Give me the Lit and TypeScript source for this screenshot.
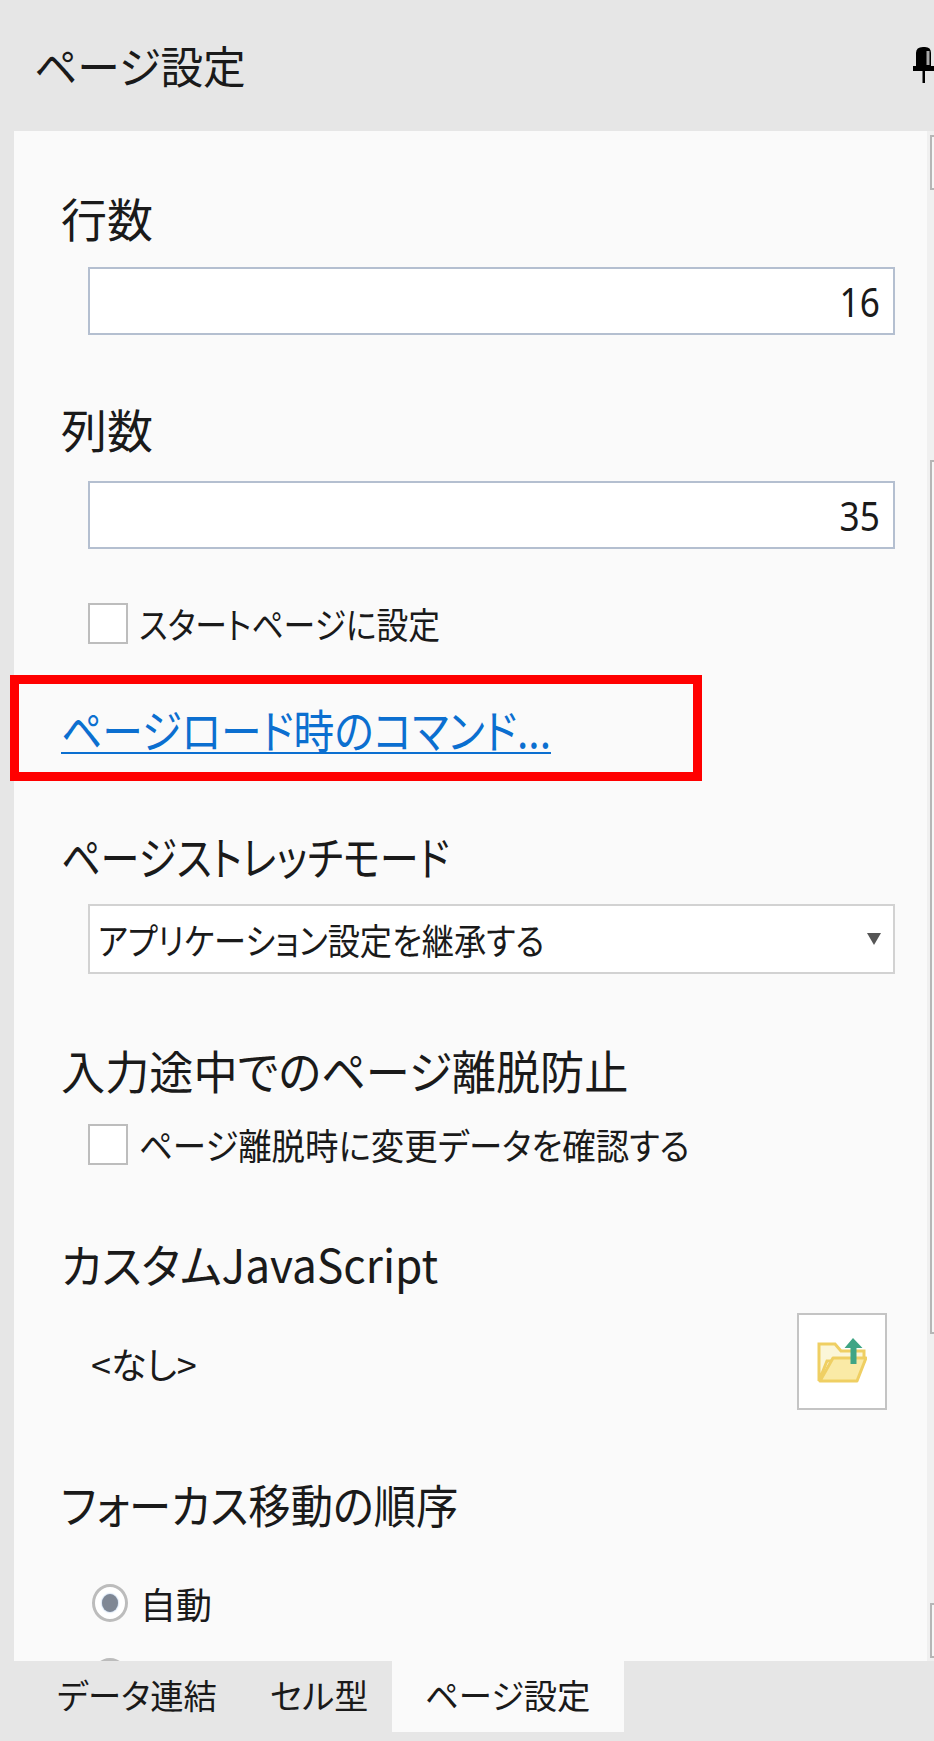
import { LitElement, html, css } from "lit";
import { customElement } from "lit/decorators.js";

@customElement("app-root")
export class AppRoot extends LitElement {
  static styles = css`
    :host {
      display: block;
      width: 934px;
      height: 1741px;
      overflow: hidden;
      background: #e6e6e6;
      color: #1a1a1a;
      font-family: "Noto Sans CJK JP", "Noto Sans", sans-serif;
      font-feature-settings: "palt";
    }
    .t { display: inline-block; transform-origin: left center; white-space: nowrap; }
    .s98 { transform: scaleX(0.98); }
    .s97 { transform: scaleX(0.97); }
    .s96 { transform: scaleX(0.96); }
    .s93 { transform: scaleX(0.93); }
    .s92 { transform: scaleX(0.92); }
    .s90 { transform: scaleX(0.895); }
    .s89 { transform: scaleX(0.885); }
    .s85 { transform: scaleX(0.85); }
    .header {
      height: 131px;
      display: flex;
      align-items: center;
      justify-content: space-between;
      padding-left: 34px;
      box-sizing: border-box;
    }
    .title { font-size: 44px; line-height: 50px; margin-top: -1px; }
    .pin { display: block; width: 21px; height: 36px; margin-top: -1px; flex: none; }
    .main { display: flex; height: 1530px; }
    .panel {
      width: 913px;
      height: 1530px;
      margin-left: 14px;
      background: #fafafa;
      clip-path: inset(0 0 0 -10px);
      display: flex;
      flex-direction: column;
      flex: none;
    }
    .panel > * { flex: none; }
    .label { font-size: 46px; line-height: 40px; height: 50px; margin-left: 47px; white-space: nowrap; }
    .field {
      width: 807px;
      margin-left: 74px;
      box-sizing: border-box;
      background: #fff;
      display: flex;
      align-items: center;
    }
    .num {
      height: 68px;
      border: 2px solid #b4bfd0;
      justify-content: flex-end;
      padding-right: 13px;
      font-size: 40px;
      font-family: "Noto Sans", sans-serif;
    }
    .num span { transform-origin: right center; transform: scaleX(0.88); }
    .select {
      height: 70px;
      border: 2px solid #d2d2d2;
      justify-content: space-between;
      padding: 0 12px 0 8px;
      font-size: 36px;
    }
    .arrow { display: block; width: 14px; height: 12px; flex: none; }
    .check {
      display: flex;
      align-items: center;
      gap: 11px;
      margin-left: 74px;
      font-size: 36px;
      line-height: 44px;
      height: 44px;
      white-space: nowrap;
    }
    .box { width: 40px; height: 41px; box-sizing: border-box; border: 2px solid #bdbdbd; background: #fff; flex: none; }
    .link-box {
      width: 692px;
      height: 106px;
      margin-left: -4px;
      box-sizing: border-box;
      border: 9px solid #ff0000;
      padding-left: 42px;
      display: flex;
      align-items: center;
    }
    .link {
      color: #0b6fd0;
      font-size: 46px;
      line-height: 50px;
      text-decoration: underline;
      text-decoration-thickness: 2px;
      text-underline-offset: 4px;
    }
    .js-row {
      display: flex;
      align-items: center;
      justify-content: space-between;
      margin-left: 77px;
      margin-right: 40px;
      height: 97px;
      font-size: 36px;
    }
    .js-text { margin-top: 2px; }
    .file-btn {
      width: 90px;
      height: 97px;
      box-sizing: border-box;
      border: 2px solid #c4c4c4;
      background: #fff;
      display: flex;
      align-items: center;
      justify-content: center;
    }
    .file-btn svg { display: block; width: 50px; height: 46px; margin-top: -4px; }
    .radio-row {
      display: flex;
      align-items: center;
      gap: 12px;
      margin-left: 78px;
      height: 38px;
      font-size: 36px;
    }
    .radio {
      width: 36px;
      height: 38px;
      box-sizing: border-box;
      border: 3px solid #bcbcbc;
      border-radius: 50%;
      background: #fff;
      display: flex;
      align-items: center;
      justify-content: center;
      flex: none;
    }
    .dot { width: 16px; height: 18px; border-radius: 50%; background: #7f8794; box-shadow: 0 0 2px #7fa3d0; }
    .m66 { margin-top: 66px; } .m20 { margin-top: 20px; } .m73 { margin-top: 73px; }
    .m23 { margin-top: 23px; } .m52 { margin-top: 52px; } .m30 { margin-top: 30px; }
    .m54 { margin-top: 54px; } .m19 { margin-top: 19px; } .m75 { margin-top: 75px; }
    .m77 { margin-top: 77px; } .m18 { margin-top: 20px; } .m73b { margin-top: 73px; }
    .m51 { margin-top: 51px; } .m36 { margin-top: 36px; }
    .scrollbar {
      flex: 1;
      background: #f0f0f0;
      padding: 4px 0 3px 3px;
      box-sizing: border-box;
      display: flex;
      flex-direction: column;
      justify-content: space-between;
    }
    .sb-part { border: 2px solid #b6b6b6; border-right: 0; background: #f6f6f6; box-sizing: border-box; flex: none; }
    .sb-btn { height: 55px; }
    .sb-mid { height: 874px; }
    .tabs { height: 80px; display: flex; font-size: 34px; box-sizing: border-box; padding-left: 14px; }
    .tab { height: 71px; display: flex; align-items: center; padding-bottom: 4px; box-sizing: border-box; white-space: nowrap; }
    .t1 { margin-left: 43px; width: 213px; }
    .t2 { width: 122px; }
    .t3 { width: 232px; background: #fafafa; padding-left: 33px; }
  `;

  render() {
    return html`
      <div class="header">
        <div class="title"><span class="t s97">ページ設定</span></div>
        <svg class="pin" viewBox="0 0 21 36">
          <path d="M3 19V6Q3 0 10 0H12Q18 0 18 6V19H21V24H12V36H9.5V24H0V19z" fill="#000" />
          <rect x="13.5" y="4" width="3" height="14" fill="#a8a8a8" />
        </svg>
      </div>
      <div class="main">
        <div class="panel">
          <div class="label m66">行数</div>
          <div class="field num m20"><span class="t">16</span></div>
          <div class="label m73">列数</div>
          <div class="field num m23"><span class="t">35</span></div>
          <div class="check m52"><span class="box"></span><span class="t s89">スタートページに設定</span></div>
          <div class="link-box m30"><span class="link t s89">ページロード時のコマンド...</span></div>
          <div class="label m54"><span class="t s85">ページストレッチモード</span></div>
          <div class="field select m19">
            <span class="t s90">アプリケーション設定を継承する</span>
            <svg class="arrow" viewBox="0 0 14 12"><path d="M0 0h14L7 12z" fill="#555" /></svg>
          </div>
          <div class="label m75"><span class="t s96">入力途中でのページ離脱防止</span></div>
          <div class="check m23"><span class="box"></span><span class="t s93">ページ離脱時に変更データを確認する</span></div>
          <div class="label m77"><span class="t s96">カスタムJavaScript</span></div>
          <div class="js-row m18">
            <span class="js-text">&lt;なし&gt;</span>
            <div class="file-btn">
              <svg viewBox="0 0 50 46">
                <path d="M2 7h16l6 7h23v10H10L2 44z" fill="#fbf6d8" stroke="#efcf63" stroke-width="3" />
                <path d="M16 21h33l-9 23H3z" fill="#faeaa6" stroke="#efcf63" stroke-width="3" stroke-linejoin="round" />
                <path d="M33.5 27V11h-6l8.500-10 9.500 10h-6v16z" fill="#3fa585" />
              </svg>
            </div>
          </div>
          <div class="label m73b"><span class="t s92">フォーカス移動の順序</span></div>
          <div class="radio-row m51"><span class="radio"><span class="dot"></span></span>自動</div>
          <div class="radio-row m36"><span class="radio"></span></div>
        </div>
        <div class="scrollbar">
          <div class="sb-part sb-btn"></div>
          <div class="sb-part sb-mid"></div>
          <div class="sb-part sb-btn"></div>
        </div>
      </div>
      <div class="tabs">
        <div class="tab t1"><span class="t s98">データ連結</span></div>
        <div class="tab t2">セル型</div>
        <div class="tab t3"><span class="t s98">ページ設定</span></div>
      </div>
    `;
  }
}
